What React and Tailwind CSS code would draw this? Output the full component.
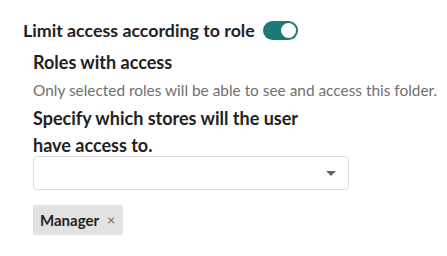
export default function App() {
  return (
    <div className="h-[256px] w-[447px] bg-white font-['Lato','Noto_Sans',sans-serif] text-[#222]">
      <div className="pl-[23px] pt-[19px]">
        <div className="flex h-[22px] items-center gap-[8px]">
          <span className="text-[17.8px] font-bold">Limit access according to role</span>
          <span className="flex h-[19px] w-[35px] items-center justify-end rounded-full bg-[#1b7a77] pr-[2px]">
            <span className="h-[15px] w-[15px] rounded-full bg-white" />
          </span>
        </div>
        <div className="pl-[10px]">
          <h3 className="mt-[10px] text-[18px] leading-[22px] font-bold">Roles with access</h3>
          <p className="mt-[7px] text-[15.4px] leading-[20px] text-[#707070]">
            Only selected roles will be able to see and access this folder.
          </p>
          <p className="mt-[5px] w-[275px] text-[18px] leading-[27px] font-bold">
            Specify which stores will the user have access to.
          </p>
          <div className="-mt-[3px] flex h-[34px] w-[316px] items-center justify-end rounded-[4px] border border-[#dcdcdc] pr-[12px]">
            <span className="h-0 w-0 border-x-[5px] border-t-[5px] border-x-transparent border-t-[#666]" />
          </div>
          <div className="mt-[15px] inline-flex h-[30px] items-center gap-[8px] rounded-[2px] bg-[#e2e2e2] pl-[7px] pr-[8px]">
            <span className="text-[15px] font-bold text-[#222]">Manager</span>
            <span className="text-[14px] leading-none text-[#666]">×</span>
          </div>
        </div>
      </div>
    </div>
  )
}
